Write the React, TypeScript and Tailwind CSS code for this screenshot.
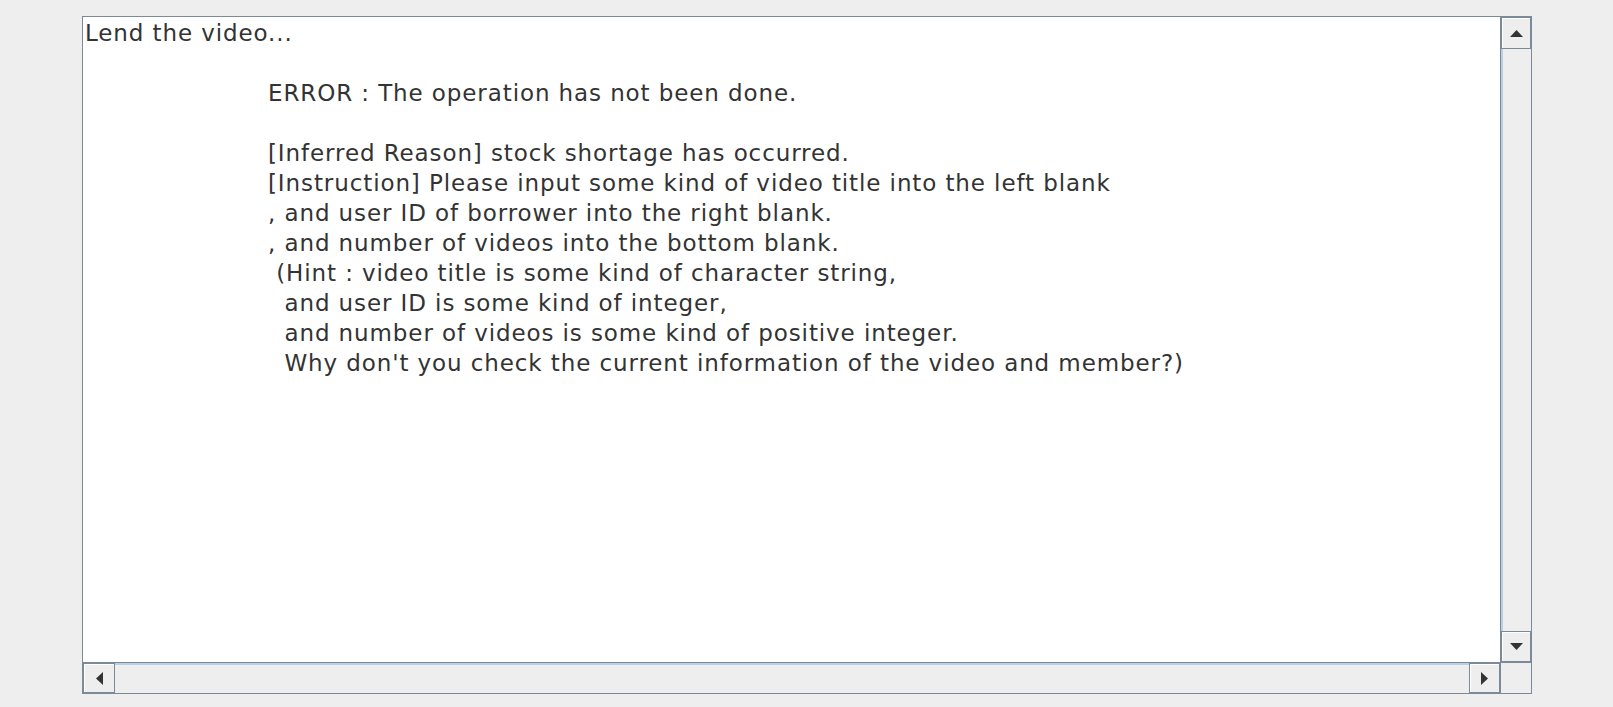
const lines = [
  "ERROR : The operation has not been done.",
  "",
  "[Inferred Reason] stock shortage has occurred.",
  "[Instruction] Please input some kind of video title into the left blank",
  ", and user ID of borrower into the right blank.",
  ", and number of videos into the bottom blank.",
  " (Hint : video title is some kind of character string,",
  "  and user ID is some kind of integer,",
  "  and number of videos is some kind of positive integer.",
  "  Why don't you check the current information of the video and member?)",
];

function Arrow({ dir }: { dir: "up" | "down" | "left" | "right" }) {
  const pts = {
    up: "0,7 13,7 6.5,0",
    down: "0,0 13,0 6.5,7",
    left: "7,0 7,13 0,6.5",
    right: "0,0 0,13 7,6.5",
  }[dir];
  const vertical = dir === "up" || dir === "down";
  return (
    <svg
      width={vertical ? 13 : 7}
      height={vertical ? 7 : 13}
      viewBox={vertical ? "0 0 13 7" : "0 0 7 13"}
    >
      <polygon points={pts} fill="#333333" />
    </svg>
  );
}

function ScrollButton({ dir }: { dir: "up" | "down" | "left" | "right" }) {
  return (
    <div className="flex items-center justify-center bg-[#eeeeee] border border-[#7a8a99] shadow-[inset_1px_1px_0_#ffffff]">
      <Arrow dir={dir} />
    </div>
  );
}

export default function App() {
  return (
    <div className="w-[1613px] h-[707px] bg-[#eeeeee] pt-[16px] pl-[82px]">
      <div className="w-[1450px] h-[678px] border border-[#7a8a99] bg-white grid grid-cols-[1fr_31px] grid-rows-[1fr_31px]">
        {/* Text area */}
        <div
          className="border-l border-t border-white pl-[1px] text-[#333333] text-[23px] tracking-[0.9px] leading-[30px] whitespace-pre overflow-hidden"
          style={{ fontFamily: '"DejaVu Sans", sans-serif' }}
        >
          <div>Lend the video...</div>
          <div>{" "}</div>
          <div className="pl-[183px]">
            {lines.map((l, i) => (
              <div key={i}>{l === "" ? " " : l}</div>
            ))}
          </div>
        </div>

        {/* Vertical scrollbar */}
        <div className="grid grid-rows-[32px_1fr_31px] bg-[#eeeeee] border-l border-[#7a8a99]">
          <ScrollButton dir="up" />
          <div className="border-l-2 border-[#b8cfe5]" />
          <ScrollButton dir="down" />
        </div>

        {/* Horizontal scrollbar */}
        <div className="grid grid-cols-[32px_1fr_31px] bg-[#eeeeee] border-t border-[#7a8a99]">
          <ScrollButton dir="left" />
          <div className="border-t-2 border-[#b8cfe5]" />
          <ScrollButton dir="right" />
        </div>

        {/* Corner */}
        <div className="bg-[#eeeeee] border-t border-l border-[#7a8a99]" />
      </div>
    </div>
  );
}
